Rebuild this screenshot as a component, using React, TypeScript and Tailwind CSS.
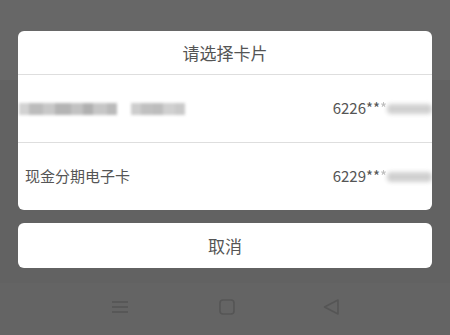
const Blur = ({ w, shade = "bg-[#c4c4c4]" }: { w: number; shade?: string }) => (
  <span
    className={`inline-block h-[10px] ${shade} blur-[2px] rounded-sm`}
    style={{ width: w }}
  />
);

// pixelated blurred name, like a mosaic
const Mosaic = () => {
  const blocks = [
    { w: 10, c: "#d2d2d2" }, { w: 14, c: "#bcbcbc" }, { w: 12, c: "#c8c8c8" }, { w: 16, c: "#b4b4b4" },
    { w: 12, c: "#c2c2c2" }, { w: 10, c: "#b0b0b0" }, { w: 14, c: "#c6c6c6" }, { w: 10, c: "#bababa" },
  ];
  const blocks2 = [
    { w: 10, c: "#cdcdcd" }, { w: 12, c: "#c0c0c0" }, { w: 10, c: "#bdbdbd" }, { w: 12, c: "#d0d0d0" }, { w: 10, c: "#c9c9c9" },
  ];
  return (
    <div className="flex items-center gap-[14px] blur-[1.5px]">
      <div className="flex h-[12px]">
        {blocks.map((b, i) => (
          <span key={i} className="h-full" style={{ width: b.w, background: b.c }} />
        ))}
      </div>
      <div className="flex h-[12px]">
        {blocks2.map((b, i) => (
          <span key={i} className="h-full" style={{ width: b.w, background: b.c }} />
        ))}
      </div>
    </div>
  );
};

const CardRow = ({ name, prefix, blurName }: { name?: string; prefix: string; blurName?: boolean }) => (
  <div className="flex h-[67px] items-center justify-between pl-[7px]">
    {blurName ? (
      <div className="-ml-[6px]">
        <Mosaic />
      </div>
    ) : (
      <span className="text-[15px] text-[#555]">{name}</span>
    )}
    <div className="flex items-center">
      <span className="text-[15px] text-[#555]">{prefix}</span>
      <span className="text-[15px] text-[#bdbdbd] blur-[0.6px]">*</span>
      <Blur w={45} shade="bg-[#d0d0d0]" />
    </div>
  </div>
);

const App = () => {
  return (
    <div
      className="flex h-[335px] w-[450px] flex-col bg-[#626262]"
      style={{ fontFamily: '"Noto Sans CJK SC", "Noto Sans", sans-serif' }}
    >
      <div className="h-[80px] bg-[#676767] -mb-[80px]" />
      <div className="relative flex flex-col gap-[13px] px-[18px] pt-[31px]">
        <div className="overflow-hidden rounded-[6px] bg-white">
          <div className="flex h-[44px] items-center justify-center border-b border-[#dedede] text-[17px] text-[#555]">
            请选择卡片
          </div>
          <div className="border-b border-[#dedede]">
            <CardRow prefix="6226**" blurName />
          </div>
          <CardRow name="现金分期电子卡" prefix="6229**" />
        </div>
        <div className="flex h-[45px] items-center justify-center rounded-[6px] bg-white text-[17px] text-[#555]">
          取消
        </div>
      </div>
      <div className="mt-auto flex h-[52px] items-center justify-center gap-[88px] bg-[#646464] pb-[4px]">
        <svg width="20" height="14" viewBox="0 0 20 14" className="mr-[4px]">
          <g stroke="#555" strokeWidth="1.6">
            <line x1="2" y1="2" x2="18" y2="2" />
            <line x1="2" y1="7" x2="18" y2="7" />
            <line x1="2" y1="12" x2="18" y2="12" />
          </g>
        </svg>
        <svg width="18" height="18" viewBox="0 0 18 18" className="-ml-[4px]">
          <rect x="2" y="2" width="14" height="14" rx="3" fill="none" stroke="#555" strokeWidth="1.6" />
        </svg>
        <svg width="19" height="18" viewBox="0 0 19 18" className="-ml-[2px]">
          <path d="M16 2 L2.5 9 L16 16 Z" fill="none" stroke="#555" strokeWidth="1.6" strokeLinejoin="round" />
        </svg>
      </div>
    </div>
  );
};

export default App;
